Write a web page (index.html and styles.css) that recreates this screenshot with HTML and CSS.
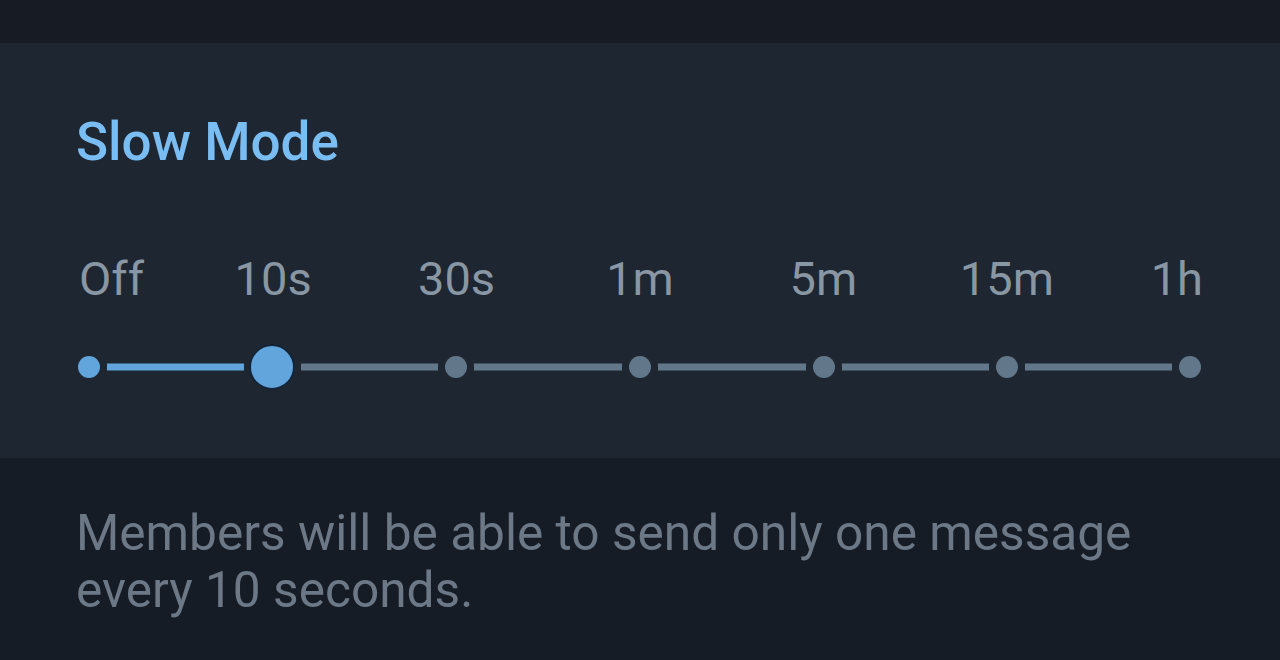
FILE: index.html
```html
<!DOCTYPE html>
<html>

<head>
    <title>Slow Mode</title>
    <link rel="stylesheet" href="styles.css">
</head>

<body>
    <div class="topbar"></div>

    <div class="card">
        <h1 class="title">Slow Mode</h1>

        <div class="labels">
            <span class="first">Off</span>
            <span>10s</span>
            <span>30s</span>
            <span>1m</span>
            <span>5m</span>
            <span>15m</span>
            <span class="last">1h</span>
        </div>

        <svg class="slider" width="1280" height="60" viewBox="0 0 1280 60">
            <!-- filled part -->
            <line x1="107" y1="30" x2="244" y2="30" stroke="#62a5dc" stroke-width="7" />
            <!-- remaining track -->
            <line x1="301" y1="30" x2="438" y2="30" stroke="#62788a" stroke-width="7" />
            <line x1="474" y1="30" x2="622" y2="30" stroke="#62788a" stroke-width="7" />
            <line x1="658" y1="30" x2="806" y2="30" stroke="#62788a" stroke-width="7" />
            <line x1="842" y1="30" x2="989" y2="30" stroke="#62788a" stroke-width="7" />
            <line x1="1025" y1="30" x2="1172" y2="30" stroke="#62788a" stroke-width="7" />

            <circle cx="89" cy="30" r="11" fill="#62a5dc" />
            <circle cx="456" cy="30" r="11" fill="#62788a" />
            <circle cx="640" cy="30" r="11" fill="#62788a" />
            <circle cx="824" cy="30" r="11" fill="#62788a" />
            <circle cx="1007" cy="30" r="11" fill="#62788a" />
            <circle cx="1190" cy="30" r="11" fill="#62788a" />

            <!-- thumb -->
            <circle cx="272" cy="30" r="22" fill="#62a5dc" stroke="#14253a" stroke-width="2" />
        </svg>
    </div>

    <p class="hint">Members will be able to send only one message every 10 seconds.</p>
</body>

</html>
```

FILE: styles.css
```css
body {
    font-family: Roboto, "Noto Sans", sans-serif;
    background-color: #161c25;
    margin: 0;
    padding: 0;
    width: 1280px;
    height: 660px;
    overflow: hidden;
}

.topbar {
    height: 43px;
    background-color: #171c24;
}

.card {
    background-color: #1e2631;
    height: 415px;
    padding-top: 1px;
    box-sizing: border-box;
}

.title {
    margin: 0;
    padding: 68px 0 0 76px;
    font-size: 53px;
    line-height: 60px;
    font-weight: 500;
    color: #79bdf2;
}

.labels {
    display: grid;
    grid-template-columns: repeat(7, 1fr);
    margin: 79px -2px 0;
    font-size: 47px;
    line-height: 56px;
    color: #8996a3;
    text-align: center;
}

.labels .first {
    text-align: left;
    padding-left: 81px;
}

.labels .last {
    text-align: right;
    padding-right: 79px;
}

.slider {
    display: block;
    margin-top: 30px;
}

.hint {
    margin: 0;
    padding: 47px 130px 0 76px;
    font-size: 49.6px;
    line-height: 57px;
    color: #6c7886;
}
```
